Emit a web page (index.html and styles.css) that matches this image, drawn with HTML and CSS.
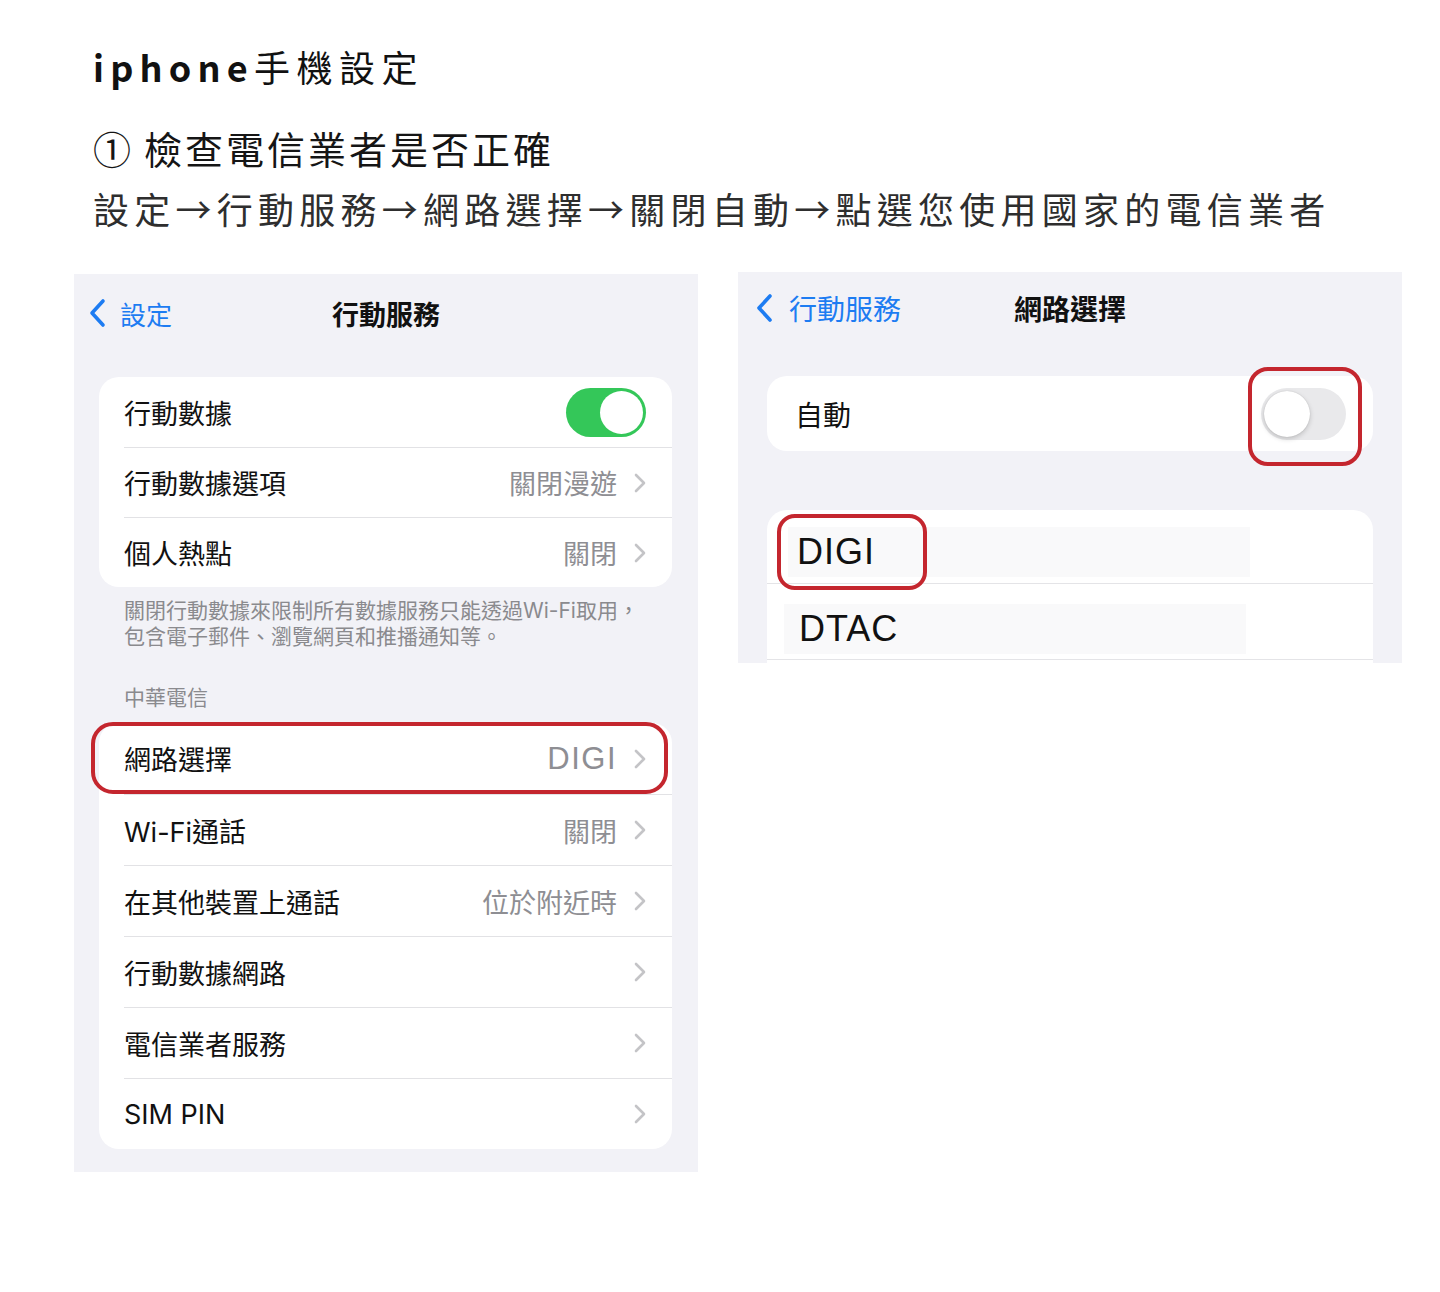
FILE: index.html
```html
<!DOCTYPE html>
<html lang="zh-Hant">
<head>
  <meta charset="UTF-8">
  <title>iphone手機設定</title>
  <link rel="stylesheet" href="styles.css">
</head>
<body>
  <header class="intro">
    <h1 class="title"><b>iphone</b>手機設定</h1>
    <p class="step"><span class="num">①</span>檢查電信業者是否正確</p>
    <p class="path">設定→行動服務→網路選擇→關閉自動→點選您使用國家的電信業者</p>
  </header>

  <main class="shots">
    <!-- 行動服務 screen -->
    <section class="phone phone-left">
      <nav class="navbar">
        <a class="back">
          <svg class="back-icon" viewBox="0 0 18 30"><path d="M15 3 L4 15 L15 27"/></svg>
          設定
        </a>
        <h2 class="nav-title">行動服務</h2>
        <span></span>
      </nav>

      <div class="group">
        <div class="row"><div class="row-in">
          <span class="label">行動數據</span>
          <span class="switch on"></span>
        </div></div>
        <div class="row"><div class="row-in">
          <span class="label">行動數據選項</span>
          <span class="value">關閉漫遊</span>
          <svg class="chev" viewBox="0 0 12 20"><path d="M2 2 L10 10 L2 18"/></svg>
        </div></div>
        <div class="row"><div class="row-in">
          <span class="label">個人熱點</span>
          <span class="value">關閉</span>
          <svg class="chev" viewBox="0 0 12 20"><path d="M2 2 L10 10 L2 18"/></svg>
        </div></div>
      </div>

      <p class="note">關閉行動數據來限制所有數據服務只能透過Wi-Fi取用，<br>包含電子郵件、瀏覽網頁和推播通知等。</p>
      <p class="section-head">中華電信</p>

      <div class="group tall">
        <div class="row marked"><div class="row-in">
          <span class="label">網路選擇</span>
          <span class="value latin">DIGI</span>
          <svg class="chev" viewBox="0 0 12 20"><path d="M2 2 L10 10 L2 18"/></svg>
        </div></div>
        <div class="row"><div class="row-in">
          <span class="label">Wi-Fi通話</span>
          <span class="value">關閉</span>
          <svg class="chev" viewBox="0 0 12 20"><path d="M2 2 L10 10 L2 18"/></svg>
        </div></div>
        <div class="row"><div class="row-in">
          <span class="label">在其他裝置上通話</span>
          <span class="value">位於附近時</span>
          <svg class="chev" viewBox="0 0 12 20"><path d="M2 2 L10 10 L2 18"/></svg>
        </div></div>
        <div class="row"><div class="row-in">
          <span class="label">行動數據網路</span>
          <svg class="chev" viewBox="0 0 12 20"><path d="M2 2 L10 10 L2 18"/></svg>
        </div></div>
        <div class="row"><div class="row-in">
          <span class="label">電信業者服務</span>
          <svg class="chev" viewBox="0 0 12 20"><path d="M2 2 L10 10 L2 18"/></svg>
        </div></div>
        <div class="row"><div class="row-in">
          <span class="label">SIM PIN</span>
          <svg class="chev" viewBox="0 0 12 20"><path d="M2 2 L10 10 L2 18"/></svg>
        </div></div>
      </div>
    </section>

    <!-- 網路選擇 screen -->
    <section class="phone phone-right">
      <nav class="navbar big">
        <a class="back">
          <svg class="back-icon" viewBox="0 0 18 30"><path d="M15 3 L4 15 L15 27"/></svg>
          行動服務
        </a>
        <h2 class="nav-title">網路選擇</h2>
        <span></span>
      </nav>

      <div class="group auto">
        <div class="auto-row">
          <span class="label">自動</span>
          <span class="switch off"><span class="mark mark-switch"></span></span>
        </div>
      </div>

      <div class="group carriers">
        <div class="carrier">
          <span class="op-bg"><span class="op">DIGI</span><span class="mark mark-op"></span></span>
        </div>
        <div class="carrier second">
          <span class="op-bg"><span class="op">DTAC</span></span>
        </div>
      </div>
    </section>
  </main>
</body>
</html>
```

FILE: styles.css
```css
body {
  margin: 0;
  background: #fff;
  font-family: "Noto Sans CJK TC", "Noto Sans", sans-serif;
  color: #111;
}

/* heading text */
.intro {
  padding: 42px 0 0 93px;
}

.title {
  margin: 0;
  font-size: 36px;
  line-height: 48px;
  font-weight: 400;
  letter-spacing: 6.5px;
  color: #111;
}

.title b {
  font-weight: 700;
  letter-spacing: 6.2px;
}

.step {
  margin: 33px 0 0;
  font-size: 38px;
  line-height: 50px;
  letter-spacing: 3px;
  color: #151515;
}

.step .num {
  margin-right: 10px;
}

.path {
  margin: 11px 0 0;
  font-size: 36px;
  line-height: 48px;
  letter-spacing: 5.25px;
  color: #2e2e2e;
}

/* screenshots */
.shots {
  display: flex;
  align-items: flex-start;
  gap: 40px;
  padding-left: 74px;
  margin-top: 40px;
}

.phone {
  background: #f2f2f7;
  font-family: Inter, "Noto Sans CJK TC", sans-serif;
}

.phone-left {
  width: 624px;
  height: 898px;
  margin-top: 2px;
}

.phone-right {
  width: 664px;
  height: 391px;
  overflow: hidden;
}

.navbar {
  display: grid;
  grid-template-columns: 1fr auto 1fr;
  align-items: center;
  height: 78px;
  padding: 0 14px;
}

.navbar.big {
  height: 72px;
  padding: 0 17px;
}

.back {
  display: flex;
  align-items: center;
  gap: 14px;
  color: #1d7cf2;
  font-size: 26px;
}

.big .back {
  gap: 16px;
  font-size: 28px;
}

.back-icon {
  width: 18px;
  height: 30px;
  fill: none;
  stroke: #1d7cf2;
  stroke-width: 3.6;
  stroke-linecap: round;
  stroke-linejoin: round;
}

.nav-title {
  margin: 0;
  font-size: 27px;
  font-weight: 700;
  color: #111;
}

.big .nav-title {
  font-size: 28px;
}

.group {
  background: #fff;
  border-radius: 20px;
  margin: 25px 26px 0 25px;
}

.row {
  position: relative;
  padding-left: 25px;
}

.row-in {
  display: flex;
  align-items: center;
  box-sizing: border-box;
  height: 70px;
  padding-right: 26px;
  font-size: 27px;
}

.tall .row-in {
  height: 71px;
}

.row + .row .row-in {
  border-top: 1px solid #e2e2e5;
}

.label {
  color: #111;
}

.value {
  margin-left: auto;
  color: #8e8e93;
}

.value.latin {
  font-family: "Liberation Sans", sans-serif;
  font-size: 31px;
  letter-spacing: 1.5px;
}

.chev {
  width: 12px;
  height: 20px;
  margin-left: 17px;
  fill: none;
  stroke: #c4c4c7;
  stroke-width: 2.6;
  stroke-linecap: round;
  stroke-linejoin: round;
}

.row-in .label + .chev {
  margin-left: auto;
}

.switch {
  position: relative;
  margin-left: auto;
  border-radius: 30px;
}

.switch.on {
  width: 80px;
  height: 49px;
  background: #34c759;
}

.switch.on::after {
  content: "";
  position: absolute;
  top: 3px;
  right: 3px;
  width: 43px;
  height: 43px;
  border-radius: 50%;
  background: #fff;
}

.switch.off {
  width: 85px;
  height: 52px;
  background: #e9e9eb;
}

.switch.off::before {
  content: "";
  position: absolute;
  top: 3px;
  left: 3px;
  width: 46px;
  height: 46px;
  border-radius: 50%;
  background: #fff;
  box-shadow: 0 2px 5px rgba(0, 0, 0, 0.18), 0 0 1px rgba(0, 0, 0, 0.2);
}

.note {
  margin: 11px 20px 0 50px;
  font-size: 21px;
  line-height: 26px;
  color: #8a8a8e;
}

.section-head {
  margin: 35px 0 0 50px;
  font-size: 21px;
  line-height: 26px;
  color: #8a8a8e;
}

.section-head + .group {
  margin-top: 12px;
}

/* red highlight boxes */
.mark,
.marked::after {
  position: absolute;
  border: 4px solid #c4262e;
  box-sizing: border-box;
}

.marked::after {
  content: "";
  top: -1px;
  bottom: 0;
  left: -8px;
  right: 4px;
  border-radius: 22px;
}

.mark-switch {
  top: -21px;
  bottom: -26px;
  left: -13px;
  right: -16px;
  border-radius: 20px;
}

.mark-op {
  top: -13px;
  left: -11px;
  width: 150px;
  height: 76px;
  border-radius: 18px;
}

/* 網路選擇 screen */
.group.auto {
  margin: 32px 29px 0;
}

.auto-row {
  display: flex;
  align-items: center;
  height: 75px;
  padding: 0 27px 0 28px;
  font-size: 28px;
}

.group.carriers {
  margin: 59px 29px 0;
  padding-bottom: 40px;
}

.carrier {
  display: flex;
  align-items: flex-start;
  box-sizing: border-box;
  height: 74px;
  padding: 17px 0 0 21px;
  border-bottom: 1px solid #e4e4e7;
}

.carrier.second {
  height: 76px;
  padding-top: 20px;
  padding-left: 17px;
}

.op-bg {
  position: relative;
  display: flex;
  align-items: center;
  width: 453px;
  height: 50px;
  padding-left: 9px;
  background: #f9f9fa;
}

.second .op-bg {
  padding-left: 15px;
  width: 447px;
}

.op {
  font-family: "Liberation Sans", sans-serif;
  font-size: 36px;
  letter-spacing: 1px;
  color: #111;
}
```
